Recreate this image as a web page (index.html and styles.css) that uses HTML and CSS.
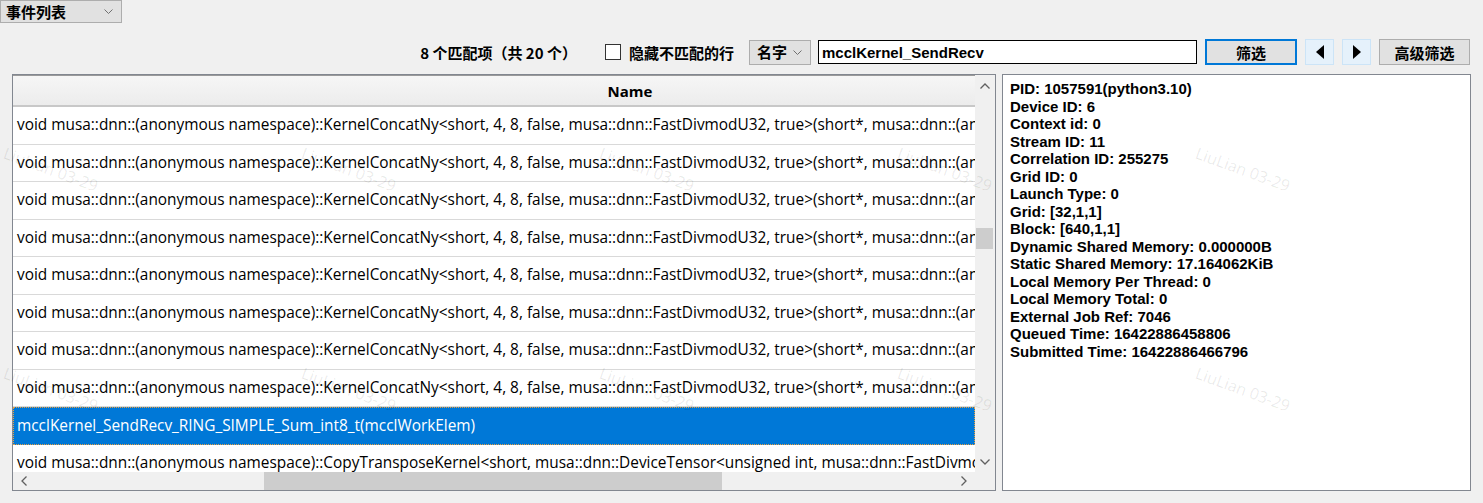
FILE: index.html
```html
<!DOCTYPE html>
<html lang="zh-CN">

<head>
    <meta charset="UTF-8">
    <title>事件列表</title>
    <link rel="stylesheet" href="styles.css">
</head>

<body>
    <div class="combo combo-view">事件列表
        <svg class="chev" width="9" height="5" viewBox="0 0 9 5"><polyline points="0.5,0.5 4.5,4.5 8.5,0.5" /></svg>
    </div>

    <div class="toolbar">
        <span class="match-count">8 个匹配项（共 20 个）</span>
        <label class="hide-rows"><span class="check"></span>隐藏不匹配的行</label>
        <div class="combo combo-field">名字
            <svg class="chev" width="9" height="5" viewBox="0 0 9 5"><polyline points="0.5,0.5 4.5,4.5 8.5,0.5" /></svg>
        </div>
        <input class="search" type="text" value="mcclKernel_SendRecv">
        <button class="btn btn-primary">筛选</button>
        <button class="btn btn-nav"><svg width="8" height="14" viewBox="0 0 8 14"><polygon points="8,0 8,14 0,7" /></svg></button>
        <button class="btn btn-nav"><svg width="8" height="14" viewBox="0 0 8 14"><polygon points="0,0 0,14 8,7" /></svg></button>
        <button class="btn btn-adv">高级筛选</button>
    </div>

    <div class="main">
        <div class="list">
            <div class="list-body">
                <div class="list-view">
                    <div class="list-head"><span>Name</span></div>
                    <div class="row">void musa::dnn::(anonymous namespace)::KernelConcatNy&lt;short, 4, 8, false, musa::dnn::FastDivmodU32, true&gt;(short*, musa::dnn::(anonymous namespace)::ConcatParams&lt;short&gt;)</div>
                    <div class="row">void musa::dnn::(anonymous namespace)::KernelConcatNy&lt;short, 4, 8, false, musa::dnn::FastDivmodU32, true&gt;(short*, musa::dnn::(anonymous namespace)::ConcatParams&lt;short&gt;)</div>
                    <div class="row">void musa::dnn::(anonymous namespace)::KernelConcatNy&lt;short, 4, 8, false, musa::dnn::FastDivmodU32, true&gt;(short*, musa::dnn::(anonymous namespace)::ConcatParams&lt;short&gt;)</div>
                    <div class="row">void musa::dnn::(anonymous namespace)::KernelConcatNy&lt;short, 4, 8, false, musa::dnn::FastDivmodU32, true&gt;(short*, musa::dnn::(anonymous namespace)::ConcatParams&lt;short&gt;)</div>
                    <div class="row">void musa::dnn::(anonymous namespace)::KernelConcatNy&lt;short, 4, 8, false, musa::dnn::FastDivmodU32, true&gt;(short*, musa::dnn::(anonymous namespace)::ConcatParams&lt;short&gt;)</div>
                    <div class="row">void musa::dnn::(anonymous namespace)::KernelConcatNy&lt;short, 4, 8, false, musa::dnn::FastDivmodU32, true&gt;(short*, musa::dnn::(anonymous namespace)::ConcatParams&lt;short&gt;)</div>
                    <div class="row">void musa::dnn::(anonymous namespace)::KernelConcatNy&lt;short, 4, 8, false, musa::dnn::FastDivmodU32, true&gt;(short*, musa::dnn::(anonymous namespace)::ConcatParams&lt;short&gt;)</div>
                    <div class="row">void musa::dnn::(anonymous namespace)::KernelConcatNy&lt;short, 4, 8, false, musa::dnn::FastDivmodU32, true&gt;(short*, musa::dnn::(anonymous namespace)::ConcatParams&lt;short&gt;)</div>
                    <div class="row selected">mcclKernel_SendRecv_RING_SIMPLE_Sum_int8_t(mcclWorkElem)</div>
                    <div class="row">void musa::dnn::(anonymous namespace)::CopyTransposeKernel&lt;short, musa::dnn::DeviceTensor&lt;unsigned int, musa::dnn::FastDivmodU32&gt;&gt;(short*)</div>
                </div>
                <div class="vscroll">
                    <svg class="arrow" width="10" height="6" viewBox="0 0 10 6"><polyline points="0.5,5.5 5,1 9.5,5.5" /></svg>
                    <div class="vtrack"><div class="vthumb"></div></div>
                    <svg class="arrow" width="10" height="6" viewBox="0 0 10 6"><polyline points="0.5,0.5 5,5 9.5,0.5" /></svg>
                </div>
            </div>
            <div class="hscroll">
                <svg class="arrow" width="6" height="10" viewBox="0 0 6 10"><polyline points="5.5,0.5 1,5 5.5,9.5" /></svg>
                <div class="htrack"><div class="hthumb"></div></div>
                <svg class="arrow" width="6" height="10" viewBox="0 0 6 10"><polyline points="0.5,0.5 5,5 0.5,9.5" /></svg>
                <div class="corner"></div>
            </div>
        </div>

        <div class="details">
            <div>PID: 1057591(python3.10)</div>
            <div>Device ID: 6</div>
            <div>Context id: 0</div>
            <div>Stream ID: 11</div>
            <div>Correlation ID: 255275</div>
            <div>Grid ID: 0</div>
            <div>Launch Type: 0</div>
            <div>Grid: [32,1,1]</div>
            <div>Block: [640,1,1]</div>
            <div>Dynamic Shared Memory: 0.000000B</div>
            <div>Static Shared Memory: 17.164062KiB</div>
            <div>Local Memory Per Thread: 0</div>
            <div>Local Memory Total: 0</div>
            <div>External Job Ref: 7046</div>
            <div>Queued Time: 16422886458806</div>
            <div>Submitted Time: 16422886466796</div>
        </div>
    </div>

    <div class="watermarks">
        <span class="wm wm-a1">LiuLian 03-29</span>
        <span class="wm wm-a2">LiuLian 03-29</span>
        <span class="wm wm-a3">LiuLian 03-29</span>
        <span class="wm wm-a4">LiuLian 03-29</span>
        <span class="wm wm-a5">LiuLian 03-29</span>
        <span class="wm wm-b1">LiuLian 03-29</span>
        <span class="wm wm-b2">LiuLian 03-29</span>
        <span class="wm wm-b3">LiuLian 03-29</span>
        <span class="wm wm-b4">LiuLian 03-29</span>
        <span class="wm wm-b5">LiuLian 03-29</span>
    </div>
</body>

</html>
```

FILE: styles.css
```css
body {
    margin: 0;
    width: 1483px;
    height: 503px;
    overflow: hidden;
    position: relative;
    background-color: #f0f0f0;
    font-family: "Open Sans", "Noto Sans CJK SC", sans-serif;
    color: #000;
}

.combo {
    box-sizing: border-box;
    display: flex;
    align-items: center;
    justify-content: space-between;
    background-color: #e1e1e1;
    border: 1px solid #adadad;
    font-family: "Noto Sans CJK SC", sans-serif;
    font-weight: bold;
    font-size: 15px;
    line-height: 20px;
}

.combo .chev {
    fill: none;
    stroke: #707070;
    stroke-width: 1;
}

.combo-view {
    width: 122px;
    height: 23px;
    padding: 0 8px 0 5px;
}

.toolbar {
    margin-top: 15px;
    height: 28px;
    display: flex;
    align-items: center;
    justify-content: flex-end;
    padding-right: 13px;
    font-family: "Noto Sans CJK SC", sans-serif;
    font-weight: bold;
    font-size: 15px;
}

.match-count {
    margin-right: 28px;
}

.hide-rows {
    display: flex;
    align-items: center;
    margin-right: 15px;
}

.check {
    box-sizing: border-box;
    width: 16px;
    height: 16px;
    margin-right: 8px;
    background-color: #fff;
    border: 1px solid #333;
}

.combo-field {
    width: 62px;
    height: 25px;
    padding: 0 8px 0 7px;
    margin-right: 7px;
}

.search {
    box-sizing: border-box;
    width: 379px;
    height: 24px;
    margin: 0 8px 0 0;
    padding: 0 3px;
    border: 1px solid #000;
    background-color: #fff;
    font-family: "Liberation Sans", Arial, sans-serif;
    font-weight: bold;
    font-size: 15px;
    color: #000;
    outline: none;
}

.btn {
    box-sizing: border-box;
    height: 26px;
    margin: 0 8px 0 0;
    padding: 0;
    background-color: #e1e1e1;
    border: 1px solid #adadad;
    font-family: "Noto Sans CJK SC", sans-serif;
    font-weight: bold;
    font-size: 15px;
    color: #000;
    display: flex;
    align-items: center;
    justify-content: center;
}

.btn-primary {
    width: 92px;
    border: 2px solid #0078d7;
}

.btn-nav {
    width: 29px;
    background-color: #e5f1fb;
    border-color: #cce4f7;
}

.btn-adv {
    width: 91px;
    margin-right: 0;
}

.main {
    margin-top: 8px;
    height: 417px;
    display: flex;
    padding-left: 12px;
    gap: 6px;
}

.list {
    box-sizing: border-box;
    width: 984px;
    height: 417px;
    border: 1px solid #828790;
    background-color: #fff;
    display: flex;
    flex-direction: column;
}

.list-body {
    flex: 1;
    display: flex;
    min-height: 0;
}

.list-view {
    flex: 1;
    overflow: hidden;
}

.list-head {
    box-sizing: border-box;
    height: 32px;
    width: 1234px;
    display: flex;
    align-items: center;
    justify-content: center;
    background: linear-gradient(#f6f6f6, #ececec);
    border-top: 1px solid #9a9a9a;
    border-bottom: 2px solid #c8c8c8;
    font-weight: bold;
    font-size: 15px;
}

.row {
    box-sizing: border-box;
    height: 37.5px;
    line-height: 36px;
    padding-left: 4px;
    white-space: nowrap;
    overflow: hidden;
    border-bottom: 1px solid #d9d9d9;
    font-size: 15.4px;
}

.row.selected {
    background-color: #0078d7;
    color: #fff;
    border: 1px dotted #e8a040;
    padding-left: 3px;
}

.vscroll {
    width: 20px;
    background-color: #f0f0f0;
    display: flex;
    flex-direction: column;
    align-items: center;
    padding: 8px 0 7px;
}

.arrow {
    fill: none;
    stroke: #606060;
    stroke-width: 1.3;
    flex: none;
}

.vtrack {
    flex: 1;
    width: 100%;
    padding-top: 139px;
}

.vthumb {
    width: 17px;
    height: 21px;
    margin-left: 1px;
    background-color: #cdcdcd;
}

.hscroll {
    height: 18px;
    background-color: #f0f0f0;
    display: flex;
    align-items: center;
    padding-left: 8px;
}

.htrack {
    flex: 1;
    height: 100%;
    padding-left: 237px;
    box-sizing: border-box;
}

.hthumb {
    width: 458px;
    height: 100%;
    background-color: #cdcdcd;
}

.corner {
    width: 20px;
    height: 100%;
    margin-left: 8px;
    background-color: #f0f0f0;
}

.details {
    box-sizing: border-box;
    width: 469px;
    height: 417px;
    border: 1px solid #828790;
    background-color: #fff;
    padding: 5px 0 0 7px;
    font-family: "Liberation Sans", Arial, sans-serif;
    font-weight: bold;
    font-size: 15px;
    line-height: 17.5px;
}

.watermarks {
    position: absolute;
    inset: 0;
    pointer-events: none;
}

.wm {
    position: absolute;
    transform: rotate(20deg);
    transform-origin: left top;
    font-family: "Open Sans", sans-serif;
    font-size: 16px;
    color: rgba(0, 0, 0, 0.09);
    white-space: nowrap;
}

.wm-a1 { left: 8px; top: 142px; }
.wm-a2 { left: 306px; top: 142px; }
.wm-a3 { left: 604px; top: 142px; }
.wm-a4 { left: 902px; top: 142px; }
.wm-a5 { left: 1200px; top: 142px; }
.wm-b1 { left: 8px; top: 362px; }
.wm-b2 { left: 306px; top: 362px; }
.wm-b3 { left: 604px; top: 362px; }
.wm-b4 { left: 902px; top: 362px; }
.wm-b5 { left: 1200px; top: 362px; }
```
